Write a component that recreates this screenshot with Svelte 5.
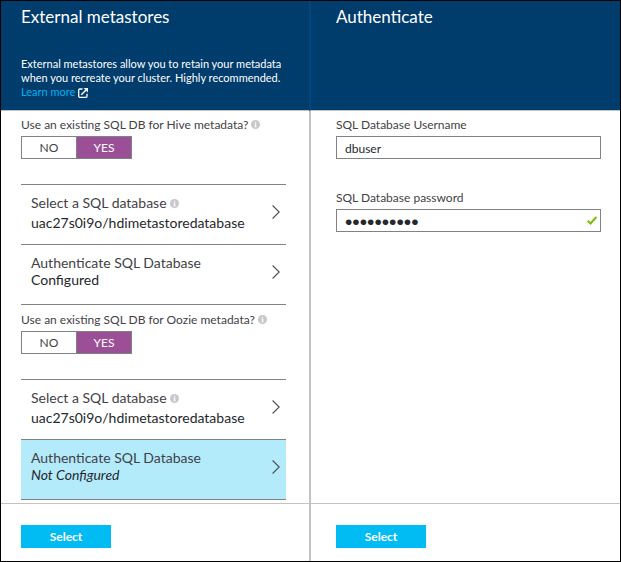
<script>
  let stores = $state([
    { name: 'Hive', useExisting: true, database: 'uac27s0i9o/hdimetastoredatabase', configured: true },
    { name: 'Oozie', useExisting: true, database: 'uac27s0i9o/hdimetastoredatabase', configured: false }
  ]);
  let username = $state('dbuser');
  let password = $state('metastore1');
</script>

{#snippet info()}
  <svg class="info" viewBox="0 0 9 9" aria-hidden="true">
    <circle cx="4.5" cy="4.5" r="4.5" fill="#c8c8c8" />
    <path d="M4 1.7h1.2v1.1H4zM3.5 3.6h1.7v2.9h.5v.7H3.4v-.7H4V4.3h-.5z" fill="#fff" />
  </svg>
{/snippet}

{#snippet chevron()}
  <svg class="chevron" viewBox="0 0 8 14" aria-hidden="true">
    <path d="M.6.5 7.2 7 .6 13.5" fill="none" stroke="#4a4d52" stroke-width="1.1" />
  </svg>
{/snippet}

<main class="blades">
  <section class="blade metastores">
    <header>
      <h1>External metastores</h1>
      <p>
        External metastores allow you to retain your metadata when you recreate your cluster. Highly recommended.
        <a href="#learn-more">Learn more<svg class="external" viewBox="0 0 10 10" aria-hidden="true">
            <path d="M4.5 1H1.7Q.7 1 .7 2v6.3q0 1 1 1H8q1 0 1-1V5.8" fill="none" stroke="#fff" stroke-width="1.3" />
            <path d="M3.3 6.8 8 2" stroke="#fff" stroke-width="1.5" />
            <path d="M5.6 0H10v4.4z" fill="#fff" />
          </svg></a>
      </p>
    </header>
    <div class="body">
      {#each stores as store}
        <div class="store">
          <div class="caption" id="caption-{store.name}">
            Use an existing SQL DB for {store.name} metadata?{@render info()}
          </div>
          <div class="toggle" role="group" aria-labelledby="caption-{store.name}">
            <button type="button" aria-pressed={!store.useExisting} onclick={() => (store.useExisting = false)}>NO</button>
            <button type="button" aria-pressed={store.useExisting} onclick={() => (store.useExisting = true)}>YES</button>
          </div>
          <div class="rows">
            <button type="button" class="row">
              <span class="text">
                <span class="name spaced">Select a SQL database{@render info()}</span>
                <span class="value">{store.database}</span>
              </span>
              {@render chevron()}
            </button>
            <button type="button" class="row" class:active={!store.configured}>
              <span class="text">
                <span class="name">Authenticate SQL Database</span>
                <span class="value" class:missing={!store.configured}>{store.configured ? 'Configured' : 'Not Configured'}</span>
              </span>
              {@render chevron()}
            </button>
          </div>
        </div>
      {/each}
    </div>
    <footer><button type="button" class="select">Select</button></footer>
  </section>

  <section class="blade authenticate">
    <header><h1>Authenticate</h1></header>
    <div class="body">
      <div class="field">
        <label class="caption" for="username">SQL Database Username</label>
        <input id="username" type="text" bind:value={username} />
      </div>
      <div class="field">
        <label class="caption" for="password">SQL Database password</label>
        <div class="checked">
          <input id="password" type="password" bind:value={password} />
          <svg class="tick" viewBox="0 0 10 9" aria-hidden="true">
            <path d="M.7 4.7 3.6 7.5 9.3 1" fill="none" stroke="#7fba00" stroke-width="2" />
          </svg>
        </div>
      </div>
    </div>
    <footer><button type="button" class="select">Select</button></footer>
  </section>
</main>

<style>
  :global(body) {
    margin: 0;
  }
  .blades {
    box-sizing: border-box;
    display: grid;
    grid-template-columns: 308fr 311fr;
    min-height: 100vh;
    border: 1px solid #000;
    background: #fff;
    color: #3f4247;
    font: 12px/16px Lato, 'Open Sans', sans-serif;
  }
  .blade {
    --left: 20px;
    --right: 23px;
    display: flex;
    flex-direction: column;
    min-width: 0;
  }
  .authenticate {
    --left: 25px;
    --right: 19px;
    border-left: 2px solid #c3c3c3;
  }
  header {
    box-sizing: border-box;
    min-height: 110px;
    padding: 3px var(--right) 0 var(--left);
    border-bottom: 1px solid #bfc3c7;
    background: #003c6c;
    color: #fff;
  }
  .authenticate header {
    margin-left: -2px;
    border-left: 2px solid #00467f;
  }
  h1 {
    margin: 0 0 27px;
    font-size: 17px;
    font-weight: 400;
    line-height: 26px;
  }
  header p {
    margin: 0;
    font-size: 11px;
    line-height: 14px;
  }
  header a {
    display: block;
    color: #00b3f0;
    text-decoration: none;
  }
  .external {
    width: 10px;
    height: 10px;
    margin-left: 3px;
    vertical-align: -2px;
  }
  .body {
    flex: 1;
    padding: 6px var(--right) 3px var(--left);
  }
  .caption {
    display: block;
    margin-bottom: 3px;
    white-space: nowrap;
  }
  .info {
    width: 9px;
    height: 9px;
    margin-left: 3px;
  }
  button,
  input {
    border-radius: 0;
    font: inherit;
    color: inherit;
  }
  .toggle {
    display: flex;
    width: 111px;
    margin-bottom: 25px;
  }
  .toggle button {
    flex: 1;
    box-sizing: border-box;
    height: 23px;
    padding: 0;
    border: 1px solid #7f8287;
    background: #fff;
  }
  .toggle button + button {
    margin-left: -1px;
  }
  .toggle button[aria-pressed='true'] {
    background: #9b4f96;
    color: #fff;
  }
  .store + .store {
    margin-top: 7px;
  }
  .rows {
    border-top: 1px solid #7f8287;
  }
  .row {
    box-sizing: border-box;
    display: flex;
    align-items: center;
    width: 100%;
    height: 60px;
    padding: 0 6px 0 10px;
    border: 0;
    border-bottom: 1px solid #7f8287;
    background: none;
    font-size: 14px;
    line-height: 17px;
    text-align: left;
  }
  .row.active {
    background: #b3ebfb;
  }
  .text {
    flex: 1;
    align-self: flex-start;
    padding-top: 9px;
    white-space: nowrap;
  }
  .name,
  .value {
    display: block;
  }
  .spaced {
    margin-bottom: 3px;
  }
  .value {
    color: #25282d;
  }
  .missing {
    font-style: italic;
  }
  .chevron {
    width: 8px;
    height: 14px;
    margin-bottom: 5px;
  }
  .field {
    margin-bottom: 31px;
  }
  input {
    box-sizing: border-box;
    display: block;
    width: 100%;
    height: 23px;
    padding: 2px 24px 0 8px;
    border: 1px solid #7f8287;
    background: #fff;
    color: #25282d;
  }
  input[type='password'] {
    font-family: 'Liberation Sans', Arial, sans-serif;
    font-size: 21px;
  }
  .checked {
    position: relative;
  }
  .tick {
    position: absolute;
    top: 7px;
    right: 4px;
    width: 10px;
    height: 9px;
  }
  footer {
    padding: 21px var(--right) 13px var(--left);
    border-top: 1px solid #c3c3c3;
  }
  .select {
    display: block;
    width: 90px;
    height: 23px;
    padding: 0;
    border: 0;
    background: #00bcf2;
    color: #fff;
    font-weight: 700;
  }
</style>
